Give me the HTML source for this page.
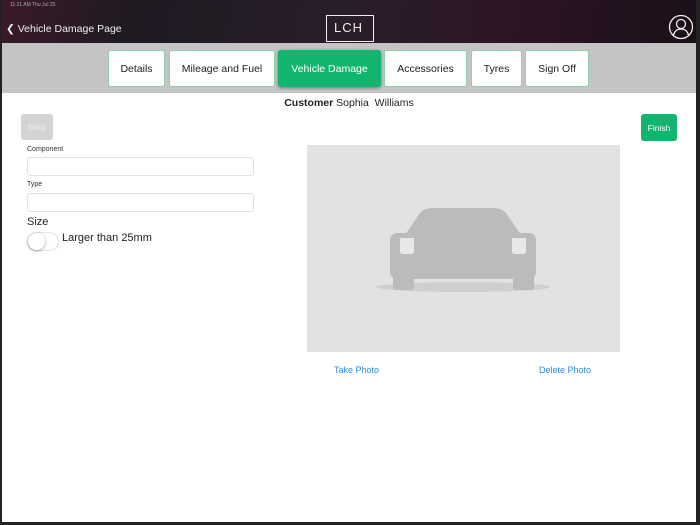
<!DOCTYPE html>
<html><head><style>
*{margin:0;padding:0;box-sizing:border-box}
body{width:700px;height:525px;background:#222;position:relative;overflow:hidden;font-family:"Liberation Sans",sans-serif}
.scr{position:absolute;left:2px;top:0;width:694px;height:522px;background:#fff;overflow:hidden}
.hdr{position:absolute;left:0;top:0;width:694px;height:43px;background:linear-gradient(100deg,#3a1a2a 0%,#1e1a22 20%,#2a1e2a 50%,#2c1426 75%,#1a1018 100%)}
.bar{position:absolute;left:0;top:43px;width:694px;height:50px;background:#c4c4c4}
.tab{position:absolute;top:50px;height:37px;background:#fff;border:1px solid #8fd0ad;border-radius:3px;font-size:10.5px;color:#222;display:flex;align-items:center;justify-content:center}
.tab.on{background:#12b56e;color:#fff;border-color:#12b56e;box-shadow:0 1px 3px rgba(0,0,0,.4)}
.lbl{position:absolute;font-size:7px;color:#333}
.inp{position:absolute;left:25px;width:227px;height:19px;border:1px solid #e2e2e2;border-radius:3px}
</style></head><body>
<div class="scr">
<div class="hdr"></div>
<div style="position:absolute;left:8px;top:2px;font-size:5px;color:#aaa">11:21 AM Thu Jul 25</div>
<div style="position:absolute;left:4px;top:23px;color:#eee;font-size:10.5px">&#10094;&nbsp;Vehicle Damage Page</div>
<div style="position:absolute;left:324px;top:15px;width:48px;height:27px;border:1.5px solid #eee"></div>
<div style="position:absolute;left:332px;top:20px;color:#eee;font-size:13px;letter-spacing:1px">LCH</div>
<svg style="position:absolute;left:666px;top:14px" width="26" height="26" viewBox="0 0 26 26" fill="none" stroke="#eee" stroke-width="1.3"><circle cx="13" cy="13" r="11.5"/><circle cx="13" cy="10" r="4.5"/><path d="M5.5 21c1-4 4-6 7.5-6s6.5 2 7.5 6"/></svg>
<div class="bar"></div>
<div class="tab" style="left:106px;width:57px">Details</div>
<div class="tab" style="left:167px;width:106px">Mileage and Fuel</div>
<div class="tab on" style="left:276px;width:103px">Vehicle Damage</div>
<div class="tab" style="left:382px;width:83px">Accessories</div>
<div class="tab" style="left:469px;width:51px">Tyres</div>
<div class="tab" style="left:523px;width:64px">Sign Off</div>
<div style="position:absolute;left:0;width:694px;top:97px;text-align:center;font-size:10.5px;color:#222"><b>Customer</b> Sophia&nbsp; Williams</div>
<div style="position:absolute;left:19px;top:114px;width:32px;height:26px;background:#d4d4d4;border-radius:3px;color:#eee;font-size:8px;display:flex;align-items:center;justify-content:center">Back</div>
<div style="position:absolute;left:639px;top:114px;width:36px;height:27px;background:#12b56e;border-radius:3px;color:#fff;font-size:8.5px;display:flex;align-items:center;justify-content:center">Finish</div>
<div class="lbl" style="left:25px;top:146px">Component</div>
<div class="inp" style="top:157px"></div>
<div class="lbl" style="left:25px;top:181px">Type</div>
<div class="inp" style="top:193px"></div>
<div style="position:absolute;left:25px;top:216px;font-size:11px;color:#222">Size</div>
<div style="position:absolute;left:25px;top:232px;width:32px;height:19px;border:1px solid #e2e2e2;border-radius:10px"></div>
<div style="position:absolute;left:26px;top:233px;width:17px;height:17px;border-radius:50%;background:#fff;box-shadow:0 1px 3px rgba(0,0,0,.35)"></div>
<div style="position:absolute;left:60px;top:232px;font-size:11px;color:#222">Larger than 25mm</div>
<div style="position:absolute;left:305px;top:145px;width:313px;height:207px;background:#e2e2e2"></div>
<svg style="position:absolute;left:0;top:0" width="694" height="522">
<ellipse cx="461" cy="287" rx="87" ry="5" fill="#cfcfcf"/>
<path d="M403 235 L418 213 Q422 208 432 208 L490 208 Q500 208 504 213 L519 235 Z" fill="#bbb"/>
<rect x="388" y="233" width="146" height="46" rx="7" fill="#bbb"/>
<rect x="391" y="270" width="21" height="20" rx="3" fill="#bbb"/>
<rect x="511" y="270" width="21" height="20" rx="3" fill="#bbb"/>
<path d="M398 238 h14 v13 q0 3 -3 3 h-8 q-3 0 -3 -3z" fill="#e8e8e8"/>
<path d="M510 238 h14 v13 q0 3 -3 3 h-8 q-3 0 -3 -3z" fill="#e8e8e8"/>
</svg>
<div style="position:absolute;left:332px;top:365px;font-size:9px;color:#2a8ee6">Take Photo</div>
<div style="position:absolute;left:537px;top:365px;font-size:9px;color:#2a8ee6">Delete Photo</div>
</div>
</body></html>
